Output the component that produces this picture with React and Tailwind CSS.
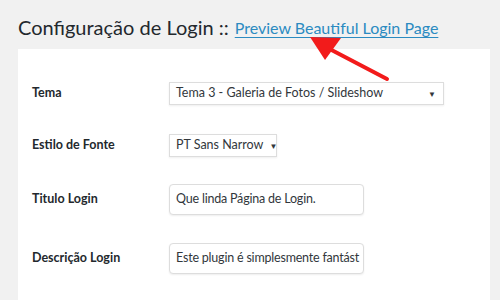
import React from "react";

const font = { fontFamily: 'Lato, "Open Sans", sans-serif' };

const Row = ({ label, children, className = "" }) => (
  <div className={`flex items-center ${className}`}>
    <div className="w-[137px] text-[12.5px] font-bold text-[#23282d] whitespace-nowrap">{label}</div>
    {children}
  </div>
);

const Select = ({ value, width }) => (
  <div className={`${width} h-[23px] border border-[#ddd] bg-white flex items-center justify-between gap-[6px] pl-[6px] pr-[7px] text-[12.5px] text-[#32373c] whitespace-nowrap shadow-[0_1px_2px_rgba(0,0,0,0.07)]`}>
    <span className="leading-none">{value}</span>
    <span className="text-[8px] leading-none">▼</span>
  </div>
);

const Input = ({ value }) => (
  <div className="w-[195px] h-[31px] border border-[#ddd] rounded-[4px] bg-white flex items-center pl-[6px] text-[12.5px] tracking-[-0.2px] text-[#32373c] overflow-hidden whitespace-nowrap shadow-[0_1px_2px_rgba(0,0,0,0.07)]">
    {value}
  </div>
);

export default function App() {
  return (
    <div className="relative w-[500px] h-[300px] bg-[#f1f1f1] overflow-hidden" style={font}>
      <div className="pl-[18px] pt-[12px] h-[49px] flex items-start whitespace-nowrap">
        <span className="text-[20px] leading-[30px] text-[#23282d]">Configuração de Login ::</span>
        <a className="ml-[6px] text-[16px] leading-[32px] text-[#2b8bc1] underline underline-offset-[3px]">
          Preview Beautiful Login Page
        </a>
      </div>
      <div className="ml-[18px] w-[472px] h-[260px] bg-white pl-[14px] pt-[33px]">
        <Row label="Tema">
          <Select value="Tema 3 - Galeria de Fotos / Slideshow" width="w-[275px]" />
        </Row>
        <Row label="Estilo de Fonte" className="mt-[29px]">
          <Select value="PT Sans Narrow" width="w-[108px]" />
        </Row>
        <Row label="Titulo Login" className="mt-[27px]">
          <Input value="Que linda Página de Login." />
        </Row>
        <Row label="Descrição Login" className="mt-[28px]">
          <Input value="Este plugin é simplesmente fantást" />
        </Row>
      </div>
      <svg className="absolute left-0 top-0" width="500" height="300" viewBox="0 0 500 300">
        <line x1="387" y1="79" x2="322" y2="45" stroke="#f21b1b" strokeWidth="4" strokeLinecap="round" />
        <polygon points="310,37 341,38 325,60" fill="#f21b1b" />
      </svg>
    </div>
  );
}
